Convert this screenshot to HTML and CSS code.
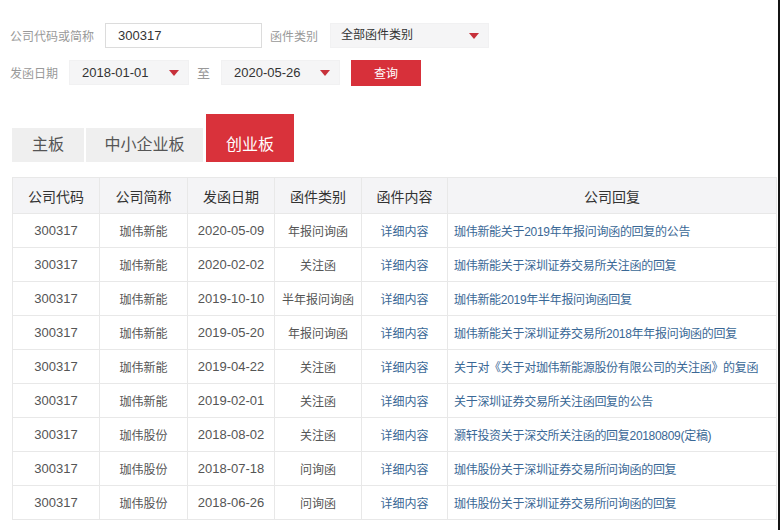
FILE: index.html
```html
<!DOCTYPE html>
<html lang="zh-CN">
<head>
  <meta charset="UTF-8" />
  <title>问询函件查询</title>
  <link rel="stylesheet" href="styles.css">
</head>
<body>
  <div class="search">
    <div class="search-row">
      <span class="label label-code">公司代码或简称</span>
      <div class="input input-code">300317</div>
      <span class="label label-type">函件类别</span>
      <div class="select select-type">全部函件类别<i class="caret"></i></div>
    </div>
    <div class="search-row">
      <span class="label label-date">发函日期</span>
      <div class="select select-date">2018-01-01<i class="caret"></i></div>
      <span class="label label-to">至</span>
      <div class="select select-date select-date2">2020-05-26<i class="caret"></i></div>
      <button class="query-button">查询</button>
    </div>
  </div>

  <div class="tabs">
    <div class="tab tab-main">主板</div>
    <div class="tab tab-sme">中小企业板</div>
    <div class="tab tab-gem active">创业板</div>
  </div>

  <table class="letters">
    <colgroup>
      <col style="width:87px"><col style="width:88px"><col style="width:87px">
      <col style="width:87px"><col style="width:86px"><col>
    </colgroup>
    <thead>
      <tr>
        <th>公司代码</th><th>公司简称</th><th>发函日期</th><th>函件类别</th><th>函件内容</th><th>公司回复</th>
      </tr>
    </thead>
    <tbody>
      <tr><td>300317</td><td>珈伟新能</td><td>2020-05-09</td><td>年报问询函</td><td><a>详细内容</a></td><td class="reply"><a>珈伟新能关于2019年年报问询函的回复的公告</a></td></tr>
      <tr><td>300317</td><td>珈伟新能</td><td>2020-02-02</td><td>关注函</td><td><a>详细内容</a></td><td class="reply"><a>珈伟新能关于深圳证券交易所关注函的回复</a></td></tr>
      <tr><td>300317</td><td>珈伟新能</td><td>2019-10-10</td><td>半年报问询函</td><td><a>详细内容</a></td><td class="reply"><a>珈伟新能2019年半年报问询函回复</a></td></tr>
      <tr><td>300317</td><td>珈伟新能</td><td>2019-05-20</td><td>年报问询函</td><td><a>详细内容</a></td><td class="reply"><a>珈伟新能关于深圳证券交易所2018年年报问询函的回复</a></td></tr>
      <tr><td>300317</td><td>珈伟新能</td><td>2019-04-22</td><td>关注函</td><td><a>详细内容</a></td><td class="reply"><a>关于对《关于对珈伟新能源股份有限公司的关注函》的复函</a></td></tr>
      <tr><td>300317</td><td>珈伟新能</td><td>2019-02-01</td><td>关注函</td><td><a>详细内容</a></td><td class="reply"><a>关于深圳证券交易所关注函回复的公告</a></td></tr>
      <tr><td>300317</td><td>珈伟股份</td><td>2018-08-02</td><td>关注函</td><td><a>详细内容</a></td><td class="reply"><a>灏轩投资关于深交所关注函的回复20180809(定稿)</a></td></tr>
      <tr><td>300317</td><td>珈伟股份</td><td>2018-07-18</td><td>问询函</td><td><a>详细内容</a></td><td class="reply"><a>珈伟股份关于深圳证券交易所问询函的回复</a></td></tr>
      <tr><td>300317</td><td>珈伟股份</td><td>2018-06-26</td><td>问询函</td><td><a>详细内容</a></td><td class="reply"><a>珈伟股份关于深圳证券交易所问询函的回复</a></td></tr>
    </tbody>
  </table>
</body>
</html>
```
FILE: styles.css
```css
html {
  margin: 0;
  padding: 0;
  background-color: #141414;
}

body {
  margin: 0;
  box-sizing: border-box;
  width: 778px;
  min-height: 100vh;
  padding: 23px 0 0 10px;
  overflow: hidden;
  background-color: #ffffff;
  color: #555;
  font-family: "Liberation Sans", "Noto Sans CJK SC", sans-serif;
}

/* ===== Filtri ===== */
.search-row {
  display: flex;
  align-items: center;
  height: 25px;
  margin-bottom: 12px;
}

.label {
  font-size: 12px;
  color: #999;
}
.label-code { width: 95px; }
.label-type { margin-left: 8px; width: 60px; }
.label-date { width: 59px; }
.label-to { margin-left: 8px; width: 24px; font-size: 13px; }

.input, .select {
  box-sizing: border-box;
  height: 25px;
  line-height: 23px;
  font-size: 13px;
  color: #333;
}

.input {
  border: 1px solid #dcdcdc;
  padding-left: 12px;
  width: 157px;
}

.select {
  position: relative;
  background-color: #f5f5f6;
  border: 1px solid #f1f1f2;
  padding-left: 10px;
}
.select-type { width: 159px; font-size: 12px; }
.select-date { width: 120px; padding-left: 12px; }
.select-date2 { width: 119px; }

.caret {
  position: absolute;
  right: 9px;
  top: 9px;
  width: 0;
  height: 0;
  border-left: 5px solid transparent;
  border-right: 5px solid transparent;
  border-top: 6px solid #c7313b;
}

.query-button {
  margin-left: 11px;
  width: 70px;
  height: 26px;
  border: none;
  background-color: #d7303a;
  color: #fff;
  font-size: 12px;
  font-family: "Liberation Sans", "Noto Sans CJK SC", sans-serif;
  padding: 0;
  cursor: pointer;
}

/* ===== Tab ===== */
.tabs {
  display: flex;
  align-items: flex-end;
  margin: 29px 0 0 2px;
  height: 48px;
}

.tab {
  height: 34px;
  line-height: 34px;
  background-color: #efefef;
  color: #555;
  font-size: 16px;
  text-align: center;
}
.tab-main { width: 72px; margin-right: 2px; }
.tab-sme { width: 117px; margin-right: 3px; }
.tab-gem { width: 88px; }

.tab.active {
  height: 48px;
  line-height: 34px;
  box-sizing: border-box;
  padding-top: 14px;
  background-color: #d9323b;
  color: #fff;
}

/* ===== Tabella ===== */
.letters {
  margin: 15px 0 0 2px;
  width: 765px;
  table-layout: fixed;
  border-collapse: collapse;
  border: 1px solid #ebebeb;
}

.letters th, .letters td {
  border: 1px solid #e8e8e8;
  text-align: center;
  padding: 0;
  white-space: nowrap;
  overflow: hidden;
}

.letters th {
  height: 35px;
  background-color: #f4f4f6;
  color: #333;
  font-size: 14px;
  font-weight: normal;
}

.letters td {
  height: 33px;
  font-size: 12px;
  color: #555;
}
.letters td:nth-child(1),
.letters td:nth-child(3) { font-size: 13px; }

.letters a {
  color: #3a6896;
  cursor: pointer;
}

.letters td.reply {
  text-align: left;
  padding-left: 6px;
  letter-spacing: -0.3px;
}
```
